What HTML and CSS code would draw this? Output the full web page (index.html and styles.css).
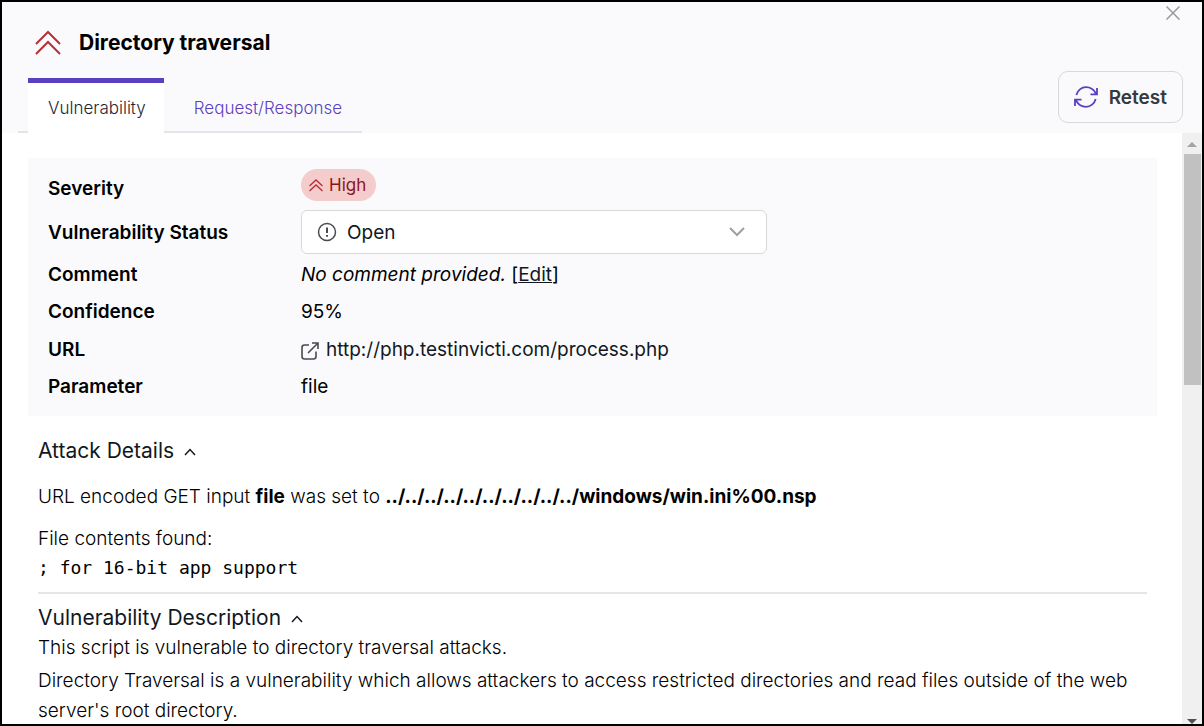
FILE: index.html
```html
<!DOCTYPE html>
<html lang="en">
<head>
<meta charset="utf-8">
<meta name="viewport" content="width=device-width, initial-scale=1">
<title>Directory traversal</title>
<link rel="stylesheet" href="styles.css">
</head>
<body>
<main class="dialog">
  <header class="header">
    <div class="heading">
      <h1 class="title">
        <svg class="title-icon" viewBox="0 0 28 26" aria-hidden="true"><path d="M2 14 14 2l12 12M2 24 14 12l12 12"/></svg>
        Directory traversal
      </h1>
      <nav class="tabs">
        <a class="tab tab-active" href="#vulnerability" aria-current="page">Vulnerability</a>
        <a class="tab" href="#request">Request/Response</a>
      </nav>
    </div>
    <div class="actions">
      <button class="close" type="button" aria-label="Close">
        <svg viewBox="0 0 14 14" aria-hidden="true"><path d="M0.5 0.5l13 13M13.5 0.5l-13 13"/></svg>
      </button>
      <button class="retest" type="button">
        <svg viewBox="0 0 24 22" aria-hidden="true"><path d="M2.300 9C3.500 4.500 7.500 1.200 12 1.200c4.500 0 8 2.800 10 6.300M23 2v6.300h-6.500M21.700 13c-1.200 4.500-5.200 7.800-9.700 7.800-4.500 0-8-2.800-10-6.300M1 20v-6.300h6.500"/></svg>
        Retest
      </button>
    </div>
  </header>
  <div class="body">
    <div class="content" id="vulnerability">
      <dl class="summary">
        <dt class="row-severity">Severity</dt>
        <dd class="row-severity">
          <span class="badge"><svg viewBox="0 0 14 13" aria-hidden="true"><path d="M0.500 7 7 1l6.500 6M0.500 12 7 6l6.500 6"/></svg>High</span>
        </dd>
        <dt class="row-status"><label for="status">Vulnerability Status</label></dt>
        <dd class="row-status">
          <div class="select-box">
            <svg class="select-icon" viewBox="0 0 20 20" aria-hidden="true"><circle cx="10" cy="10" r="8.500"/><path d="M10 5.500v5.500M10 13v1.800" stroke-width="2"/></svg>
            <select id="status"><option>Open</option></select>
            <svg class="select-arrow" viewBox="0 0 16 10" aria-hidden="true"><path d="M1 1l7 7 7-7"/></svg>
          </div>
        </dd>
        <dt>Comment</dt>
        <dd><em>No comment provided.</em>&nbsp;[<a class="edit" href="#edit">Edit</a>]</dd>
        <dt>Confidence</dt>
        <dd>95%</dd>
        <dt class="row-url">URL</dt>
        <dd class="row-url"><a class="url" href="http://php.testinvicti.com/process.php"><svg viewBox="0 0 18 18" aria-hidden="true"><path d="M8 3H3.500Q1 3 1 5.500v9Q1 17 3.500 17h9q2.500 0 2.500-2.500V9.500M11 1h6v6M17 1 7 11"/></svg>http://php.testinvicti.com/process.php</a></dd>
        <dt>Parameter</dt>
        <dd>file</dd>
      </dl>
      <section class="section attack">
        <h2><button class="toggle" type="button" aria-expanded="true">Attack Details<svg viewBox="0 0 12 8" aria-hidden="true"><path d="M1 7l5-5.500L11 7"/></svg></button></h2>
        <p class="input-line">URL encoded GET input <b>file</b> was set to <b>../../../../../../../../../../windows/win.ini%00.nsp</b></p>
        <p class="found">File contents found:</p>
        <pre class="code">; for 16-bit app support</pre>
      </section>
      <section class="section description">
        <h2><button class="toggle" type="button" aria-expanded="true">Vulnerability Description<svg viewBox="0 0 12 8" aria-hidden="true"><path d="M1 7l5-5.500L11 7"/></svg></button></h2>
        <p class="lead">This script is vulnerable to directory traversal attacks.</p>
        <p>Directory Traversal is a vulnerability which allows attackers to access restricted directories and read files outside of the web server's root directory.</p>
      </section>
    </div>
    <div class="scrollbar" aria-hidden="true">
      <svg class="scroll-up" viewBox="0 0 10 5"><path d="M0 5 5 0l5 5z"/></svg>
      <div class="thumb"></div>
      <svg class="scroll-down" viewBox="0 0 10 5"><path d="M0 0h10L5 5z"/></svg>
    </div>
  </div>
</main>
</body>
</html>
```
FILE: styles.css
```css
* { box-sizing: border-box; }

body {
  margin: 0;
  font-family: "Inter", "Liberation Sans", sans-serif;
  font-size: 19px;
  font-weight: 300;
  color: #000;
}

h1, h2, p, dl, dd, pre { margin: 0; }
button, select { font: inherit; }
svg { fill: none; stroke: currentColor; flex: none; }

.dialog {
  display: flex;
  flex-direction: column;
  height: 100vh;
  border: 2px solid #000;
  background: #fff;
  overflow: hidden;
}

.header {
  display: flex;
  justify-content: space-between;
  flex: none;
  background: #fafafc;
}

.heading { padding-left: 16px; }

.title {
  display: flex;
  align-items: center;
  gap: 17px;
  height: 76px;
  padding: 5px 0 0 16px;
  font-size: 21px;
  line-height: 28px;
  font-weight: 700;
}
.title-icon { width: 28px; height: 26px; color: #b53034; stroke-width: 2; }

.tabs {
  display: flex;
  padding-left: 10px;
  background: linear-gradient(#e5e5e9, #e5e5e9) bottom / 100% 2px no-repeat;
}
.tab {
  padding: 15px 20px 14px 30px;
  border-top: 5px solid transparent;
  font-size: 17px;
  line-height: 21px;
  color: #5d3fc0;
  text-decoration: none;
}
.tab-active {
  padding-right: 18px;
  padding-left: 20px;
  border-color: #5a3fc0;
  background: #fff;
  color: #1f2733;
}

.actions {
  display: flex;
  flex-direction: column;
  align-items: flex-end;
  justify-content: space-between;
  padding: 4px 19px 10px 0;
}
.close {
  display: flex;
  padding: 0;
  margin-right: 3px;
  border: 0;
  background: none;
  color: #999;
}
.close svg { width: 14px; height: 14px; stroke-width: 1.5; }
.retest {
  display: flex;
  align-items: center;
  gap: 11px;
  height: 52px;
  padding: 0 15px;
  border: 1px solid #d8d8d8;
  border-radius: 10px;
  background: #fafafc;
  color: #343a40;
  font-size: 19px;
  font-weight: 600;
}
.retest svg { width: 24px; height: 22px; color: #5a3fc0; stroke-width: 1.800; }

.body { display: flex; flex: 1; min-height: 0; }
.content { flex: 1; min-width: 0; padding: 25px 25px 0 26px; overflow: hidden; }

.summary {
  display: grid;
  grid-template-columns: 253px 1fr;
  padding: 10px 20px 11px;
  background: #fafafc;
  font-weight: 400;
}
.summary dt, .summary dd { display: flex; align-items: center; min-height: 37px; }
.summary dt { font-weight: 600; }
.summary .row-severity { min-height: 40px; }
.summary dd.row-severity { padding-bottom: 6px; }
.summary .row-status { min-height: 48px; }
.summary .row-url { min-height: 38px; }

.badge {
  display: flex;
  align-items: center;
  gap: 6px;
  height: 32px;
  padding: 0 10px 0 8px;
  border-radius: 16px;
  background: #f4cccc;
  color: #8c1420;
  font-size: 17px;
}
.badge svg { width: 14px; height: 13px; color: #b53034; stroke-width: 1.300; }

.select-box { position: relative; width: 466px; max-width: 100%; }
.select-box select {
  display: block;
  width: 100%;
  height: 44px;
  padding: 0 45px;
  border: 1px solid #d8d8d8;
  border-radius: 6px;
  background: #fff;
  color: #111823;
  appearance: none;
}
.select-icon, .select-arrow { position: absolute; pointer-events: none; }
.select-icon { left: 16px; top: 12px; width: 20px; height: 20px; color: #4a4a55; stroke-width: 1.500; }
.select-arrow { right: 22px; top: 17px; width: 16px; height: 10px; color: #a0a0a4; stroke-width: 2; }

.edit, .url { color: #111823; }
.url { display: flex; align-items: center; gap: 7px; text-decoration: none; }
.url svg { width: 18px; height: 18px; margin-top: 3px; color: #4a4a55; stroke-width: 1.600; }

.section { margin: 0 10px; line-height: 30px; }
.section h2 { font-size: 21px; font-weight: 400; }
.toggle {
  display: flex;
  align-items: center;
  gap: 10px;
  padding: 0;
  border: 0;
  background: none;
  line-height: 30px;
  color: #111823;
}
.toggle svg { width: 12px; height: 8px; margin-top: 2px; stroke-width: 1.500; }
.attack { padding: 20px 0 10px; border-bottom: 2px solid #e5e5e5; }
.input-line { margin: 16px 0 12px; }
.section b { font-weight: 700; }
.code { font-family: "DejaVu Sans Mono", monospace; font-size: 18px; line-height: 28px; }
.description { padding-top: 9px; }
.lead { margin-bottom: 3px; }

.scrollbar {
  display: flex;
  flex-direction: column;
  align-items: center;
  width: 20px;
  background: #f0f0f0;
}
.scrollbar svg { width: 10px; height: 5px; stroke: none; }
.scroll-up { margin: 9px 0 7px; fill: #a3a3a3; }
.scroll-down { margin-top: auto; fill: #505050; }
.thumb { width: 17px; height: 231px; background: #c1c1c1; }
```
